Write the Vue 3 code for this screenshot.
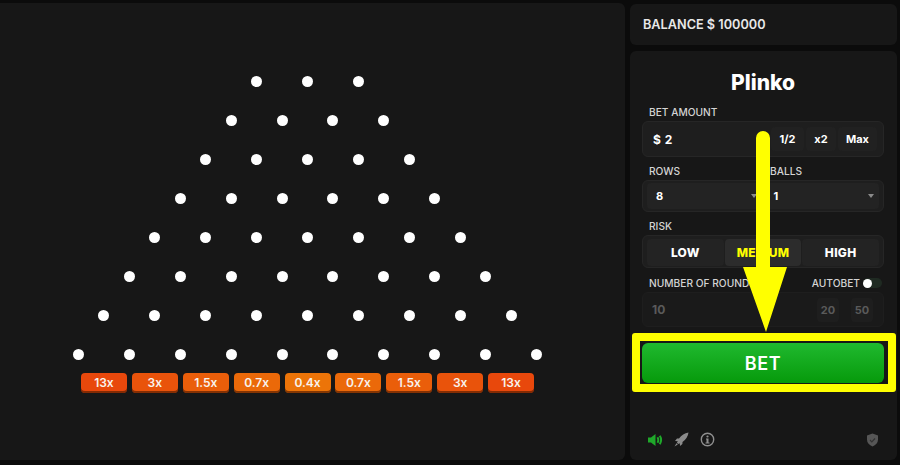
<template>
  <div class="page">
    <div class="board">
      <div class="pegs">
        <div v-for="(count, r) in rows" :key="r" class="peg-row">
          <span v-for="n in count" :key="n" class="peg"></span>
        </div>
      </div>
      <div class="multis">
        <div
          v-for="(m, i) in multis"
          :key="i"
          class="multi"
          :style="{ background: multiColor(i) }"
        >{{ m }}</div>
      </div>
    </div>

    <div class="side">
      <div class="balance">BALANCE $ 100000</div>

      <div class="controls">
        <h1 class="title">Plinko</h1>

        <label class="label bet-label">BET AMOUNT</label>
        <div class="field bet-field">
          <span class="dollar">$</span>
          <span class="bet-value">2</span>
          <span class="mini half">1/2</span>
          <span class="mini double">x2</span>
          <span class="mini max">Max</span>
        </div>

        <div class="two-labels">
          <label class="label">ROWS</label>
          <label class="label">BALLS</label>
        </div>
        <div class="field selects">
          <div class="select"><span>8</span><i class="caret"></i></div>
          <div class="select"><span>1</span><i class="caret"></i></div>
        </div>

        <label class="label risk-label">RISK</label>
        <div class="field risk">
          <div class="risk-btn">LOW</div>
          <div class="risk-btn active">MEDIUM</div>
          <div class="risk-btn">HIGH</div>
        </div>

        <div class="round-labels">
          <label class="label">NUMBER OF ROUNDS</label>
          <div class="autobet">
            <label class="label">AUTOBET</label>
            <div class="toggle"><span class="knob"></span></div>
          </div>
        </div>
        <div class="field rounds">
          <span class="round-value">10</span>
          <span class="round-opt">20</span>
          <span class="round-opt">50</span>
        </div>

        <button class="bet-btn">BET</button>

        <div class="footer">
          <svg class="icon" width="16" height="14" viewBox="0 0 16 14">
            <path d="M1 4.500h3L8.500 1v12L4 9.500H1z" fill="#1fa82a" />
            <path d="M10.500 4.200q1.600 2.800 0 5.600M12.800 2.800q2.600 4.200 0 8.400" fill="none" stroke="#1fa82a" stroke-width="2" />
          </svg>
          <svg class="icon" width="15" height="15" viewBox="0 0 15 15">
            <path d="M14.500.5C10.500 1 7.500 3 5 6.500L3 6.600 1 9l2.800.2L2.900 10.700l1.400 1.400 1.500-.9.2 2.800 2.400-2 .1-2c3.500-2.500 5.500-5.500 6-9.500z" fill="#8b8b8b" />
            <path d="M2.500 11.200.5 14.500l3.300-2z" fill="#8b8b8b" />
          </svg>
          <svg class="icon" width="15" height="15" viewBox="0 0 15 15">
            <circle cx="7.500" cy="7.500" r="6.200" fill="none" stroke="#8f8f8f" stroke-width="1.400" />
            <circle cx="7.500" cy="4.500" r="1.100" fill="#8f8f8f" />
            <path d="M6 6.500h2.500v4H9.500v1h-4v-1h1v-3H6z" fill="#8f8f8f" />
          </svg>
          <svg class="icon shield" width="13" height="14" viewBox="0 0 13 14">
            <path d="M6.500.5 12 2.500v4.300c0 3.200-2.300 5.500-5.500 6.700C3.300 12.300 1 10 1 6.800V2.500z" fill="#565656" />
            <path d="M4 7l1.800 1.800L9 5.500" fill="none" stroke="#333" stroke-width="1.200" />
          </svg>
        </div>
      </div>
    </div>

    <!-- yellow annotation on top of the screenshot -->
    <div class="highlight"></div>
    <svg class="arrow" width="46" height="203" viewBox="0 0 46 203">
      <path d="M13 8a7 7 0 0 1 14 0V137H44L23 202 0 137H13z" fill="#ffff00" />
    </svg>
  </div>
</template>

<script setup>
const rows = [3, 4, 5, 6, 7, 8, 9, 10]
const multis = ['13x', '3x', '1.5x', '0.7x', '0.4x', '0.7x', '1.5x', '3x', '13x']

// colour goes from red-orange on the edge to orange in the middle
const multiColor = (i) => {
  const d = 4 - Math.abs(i - 4)
  const g = 72 + d * 11
  return `rgb(${232 + d}, ${g}, ${12 - d})`
}
</script>

<style scoped>
.page {
  position: relative;
  display: flex;
  gap: 5px;
  width: 900px;
  height: 465px;
  box-sizing: border-box;
  padding: 3px 3px 5px 0;
  background: #0b0b0b;
  font-family: Inter, "Liberation Sans", sans-serif;
  color: #fff;
  overflow: hidden;
}

.board {
  width: 625px;
  box-sizing: border-box;
  padding: 73px 10px 0 0;
  background: #171717;
  border-radius: 0 6px 6px 0;
  display: flex;
  flex-direction: column;
  align-items: center;
}

.pegs {
  display: flex;
  flex-direction: column;
  gap: 28px;
}

.peg-row {
  display: flex;
  justify-content: center;
  gap: 39.900px;
  height: 11px;
}

.peg {
  width: 11px;
  height: 11px;
  border-radius: 50%;
  background: #fff;
}

.multis {
  display: flex;
  gap: 4.900px;
  margin-top: 13px;
}

.multi {
  width: 46px;
  height: 20px;
  border-radius: 4px;
  box-shadow: inset 0 -2px 0 rgba(90, 30, 0, 0.7);
  font-size: 12px;
  font-weight: 600;
  line-height: 19px;
  text-align: center;
  color: #f8f3ee;
}

.side {
  flex: 1;
  display: flex;
  flex-direction: column;
  gap: 6px;
}

.balance {
  height: 41px;
  flex-shrink: 0;
  box-sizing: border-box;
  margin-top: 1px;
  padding: 0 13px;
  background: #171717;
  border-radius: 6px;
  font-size: 12.700px;
  font-weight: 600;
  line-height: 41px;
  color: #e8e8e8;
}

.controls {
  flex: 1;
  display: flex;
  flex-direction: column;
  box-sizing: border-box;
  padding: 0 13px 13px 12px;
  background: #171717;
  border-radius: 6px;
}

.title {
  margin: 20px 0 0;
  font-size: 21px;
  font-weight: 800;
  line-height: 23px;
  text-align: center;
}

.label {
  display: block;
  font-size: 10.200px;
  font-weight: 500;
  line-height: 12px;
  color: #d4d4d4;
  white-space: nowrap;
}

.bet-label {
  margin: 12px 0 3px 7px;
}

.field {
  box-sizing: border-box;
  background: #1e1e1e;
  border: 1px solid #262626;
  border-radius: 6px;
  display: flex;
  align-items: center;
}

.bet-field {
  height: 36px;
  padding: 0 6px 0 10px;
  font-size: 12px;
  font-weight: 700;
}

.dollar {
  margin-right: 4px;
}

.bet-value {
  flex: 1;
}

.mini {
  height: 24px;
  margin-left: 2px;
  background: #212121;
  border-radius: 4px;
  font-size: 11px;
  line-height: 24px;
  text-align: center;
}

.half {
  width: 33px;
}

.double {
  width: 30px;
}

.max {
  width: 39px;
}

.two-labels {
  display: grid;
  grid-template-columns: 121px 1fr;
  margin: 8px 0 3px 7px;
}

.selects {
  height: 32px;
  padding: 0 4px;
  gap: 3px;
}

.select {
  flex: 1;
  height: 26px;
  display: flex;
  align-items: center;
  justify-content: space-between;
  box-sizing: border-box;
  padding: 0 5px 0 9px;
  background: #232323;
  border-radius: 4px;
  font-size: 11px;
  font-weight: 700;
}

.caret {
  width: 0;
  height: 0;
  border-left: 3px solid transparent;
  border-right: 3px solid transparent;
  border-top: 4px solid #8a8a8a;
}

.risk-label {
  margin: 8px 0 3px 7px;
}

.risk {
  height: 33px;
  padding: 1px 4px 0;
  gap: 1px;
}

.risk-btn {
  flex: 1;
  height: 27px;
  background: #232323;
  border-radius: 4px;
  font-size: 12px;
  font-weight: 800;
  line-height: 27px;
  text-align: center;
  letter-spacing: 0.3px;
}

.risk-btn.active {
  background: #2c2c2c;
  color: #ffff00;
}

.round-labels {
  display: flex;
  justify-content: space-between;
  align-items: center;
  margin: 9px 0 3px 7px;
}

.autobet {
  display: flex;
  align-items: center;
  gap: 3px;
}

.toggle {
  width: 19px;
  height: 10px;
  background: #1f2a22;
  border-radius: 5px;
  margin-right: 2px;
}

.knob {
  display: block;
  width: 9px;
  height: 9px;
  margin-top: 0.500px;
  background: #fff;
  border-radius: 50%;
}

.rounds {
  height: 35px;
  padding: 0 10px 0 9px;
  background: #1a1a1a;
  border-color: #1e1e1e;
  font-size: 11px;
  font-weight: 700;
  color: #5a5a5a;
}

.round-value {
  flex: 1;
  font-size: 12px;
}

.round-opt {
  width: 22px;
  height: 24px;
  margin-left: 12px;
  background: #1e1e1e;
  border-radius: 4px;
  line-height: 24px;
  text-align: center;
}

.bet-btn {
  height: 40px;
  margin-top: 16px;
  border: none;
  border-radius: 6px;
  background: linear-gradient(#20b92f, #069a0b);
  color: #fff;
  font-family: inherit;
  font-size: 18px;
  font-weight: 600;
  letter-spacing: 0.6px;
}

.footer {
  margin-top: auto;
  display: flex;
  align-items: center;
  gap: 11px;
  padding: 0 5px;
}

.icon {
  flex-shrink: 0;
}

.shield {
  margin-left: auto;
}

.highlight {
  position: absolute;
  left: 632px;
  top: 333px;
  width: 264px;
  height: 59px;
  box-sizing: border-box;
  border: 8px solid #ffff00;
  border-radius: 3px;
}

.arrow {
  position: absolute;
  left: 743px;
  top: 130px;
}
</style>
